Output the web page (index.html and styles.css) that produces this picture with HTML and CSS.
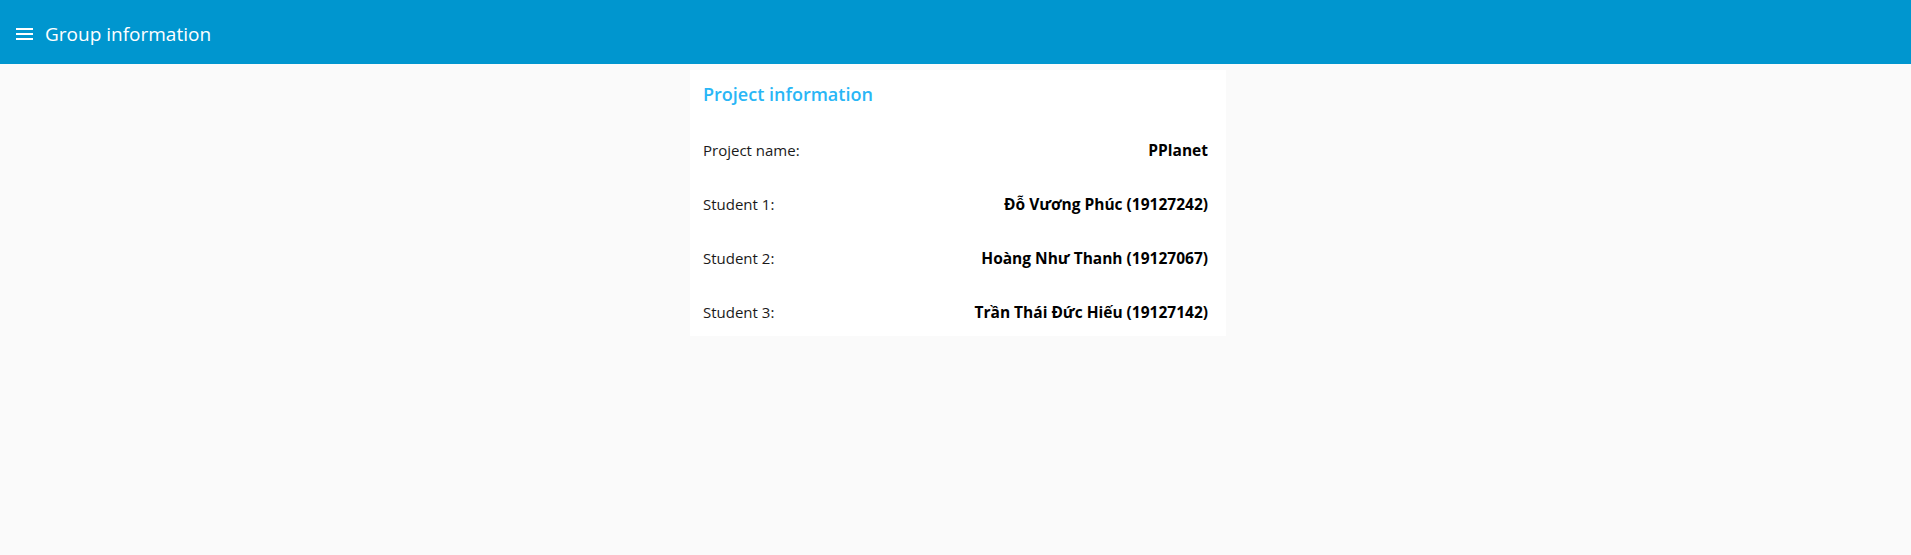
FILE: index.html
```html
<!DOCTYPE html>
<html lang="vi">
<head>
<meta charset="utf-8">
<title>Group information</title>
<link rel="stylesheet" href="styles.css">
</head>
<body>
<header class="appbar">
  <svg class="menu-icon" width="17" height="14" viewBox="0 0 17 14" aria-hidden="true">
    <rect x="0" y="1" width="17" height="2" fill="#fff"/>
    <rect x="0" y="6" width="17" height="2" fill="#fff"/>
    <rect x="0" y="11" width="17" height="2" fill="#fff"/>
  </svg>
  <h1 class="appbar-title">Group information</h1>
</header>
<main class="content">
  <section class="card">
    <h2 class="card-title">Project information</h2>
    <div class="row"><span class="label">Project name:</span><span class="value">PPlanet</span></div>
    <div class="row"><span class="label">Student 1:</span><span class="value">Đỗ Vương Phúc (19127242)</span></div>
    <div class="row"><span class="label">Student 2:</span><span class="value">Hoàng Như Thanh (19127067)</span></div>
    <div class="row"><span class="label">Student 3:</span><span class="value">Trần Thái Đức Hiếu (19127142)</span></div>
  </section>
</main>
</body>
</html>
```
FILE: styles.css
```css
html, body {
  margin: 0;
  padding: 0;
  background: #fafafa;
  font-family: "Open Sans", "Noto Sans", sans-serif;
}
.appbar {
  height: 64px;
  background: #0096cf;
  display: flex;
  align-items: center;
  padding-left: 16px;
  gap: 12px;
  box-sizing: border-box;
}
.menu-icon {
  display: block;
  margin-top: 4px;
}
.appbar-title {
  margin: 4px 0 0;
  color: #fff;
  font-size: 19px;
  font-weight: 400;
  line-height: 24px;
}
.content {
  display: flex;
  justify-content: center;
  padding: 6px 0 0 5px;
}
.card {
  width: 536px;
  background: #fff;
  box-sizing: border-box;
  padding: 12px 18px 0 13px;
}
.card-title {
  margin: 0 0 14px;
  font-size: 18px;
  font-weight: 600;
  line-height: 24px;
  color: #29b6f6;
}
.row {
  display: flex;
  justify-content: space-between;
  padding: 20px 0 14px;
  line-height: 20px;
  font-size: 15px;
}
.label {
  color: #1a1a1a;
}
.value {
  color: #000;
  font-weight: 700;
  font-size: 15.5px;
}
```
